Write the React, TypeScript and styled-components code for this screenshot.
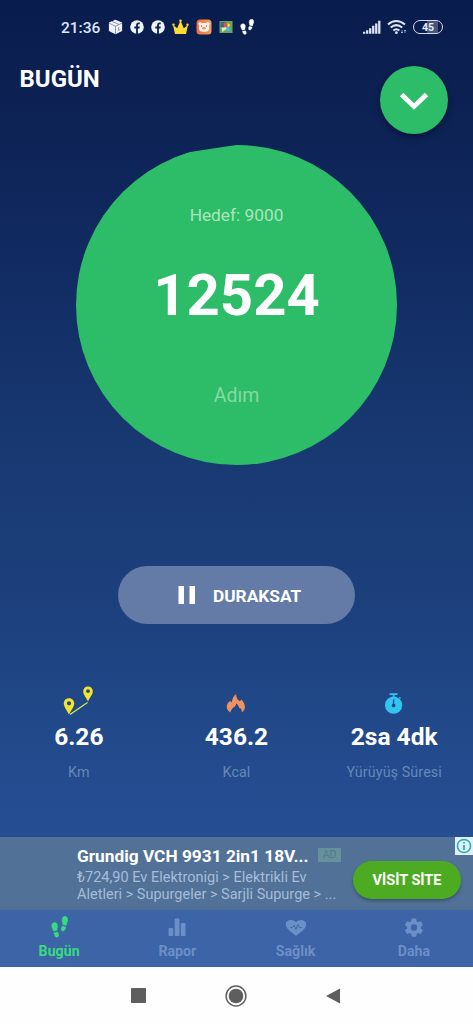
import React from "react";
import styled, { createGlobalStyle } from "styled-components";

const GlobalStyle = createGlobalStyle`
  * { box-sizing: border-box; }
  body { margin: 0; font-family: Roboto, "Noto Sans", sans-serif; }
  svg { display: block; flex: none; }
`;

const Screen = styled.main`
  width: 473px;
  height: 1024px;
  overflow: hidden;
  display: flex;
  flex-direction: column;
  color: #fff;
  background: linear-gradient(180deg, #091c4e 0, #0c2052 90px, #112b62 260px, #183871 440px, #1d417e 620px, #224a8b 740px, #254e93 837px);
`;

const StatusBar = styled.header`
  height: 54px;
  padding: 0 30px 0 61px;
  display: flex;
  align-items: center;
  justify-content: space-between;
`;

const StatusGroup = styled.div<{ $gap: number }>`
  display: flex;
  align-items: center;
  gap: ${(p) => p.$gap}px;
`;

const Clock = styled.span`
  width: 40px;
  padding-top: 2px;
  font-size: 15.5px;
  font-weight: 500;
  line-height: 20px;
  color: #dfe6f7;
  white-space: nowrap;
`;

const Battery = styled.span`
  width: 30px;
  height: 14px;
  border: 1.5px solid #d3daec;
  border-radius: 7px;
  display: grid;
  place-items: center;
  font-size: 10.5px;
  font-weight: 700;
  line-height: 11px;
  color: #e6ebf7;
  background: linear-gradient(90deg, transparent 45%, #46547c 45%, #46547c 85%, transparent 85%);
`;

const TitleBar = styled.div`
  height: 91px;
  padding: 12px 25px 0 19.5px;
  display: flex;
  align-items: flex-start;
  justify-content: space-between;
`;

const Title = styled.h1`
  margin: -1px 0 0;
  font-size: 24px;
  line-height: 28px;
  font-weight: 700;
`;

const RoundButton = styled.button`
  width: 68px;
  height: 68px;
  padding: 0;
  border: 0;
  border-radius: 50%;
  display: grid;
  place-items: center;
  background: #2dbc67;
  box-shadow: 0 3px 6px rgba(0, 8, 35, 0.5);
`;

const Dial = styled.section`
  width: 321px;
  height: 320px;
  margin: 0 auto;
  border-radius: 50%;
  background: #2dbc67;
  clip-path: polygon(0 0, 36px 30px, 114px 7px, 160px 0, 321px 0, 321px 321px, 0 321px);
  display: flex;
  flex-direction: column;
  align-items: center;
  padding-top: 60px;
`;

const Goal = styled.span`
  font-size: 17.3px;
  line-height: 20px;
  color: #a9e6bd;
`;

const Steps = styled.strong`
  margin-top: 36px;
  font-size: 58px;
  line-height: 68px;
  font-weight: 700;
`;

const Unit = styled.span`
  margin-top: 55px;
  font-size: 19.5px;
  line-height: 24px;
  color: #86d9a3;
`;

const PauseButton = styled.button`
  width: 237px;
  height: 58px;
  margin: 101px auto 0;
  padding: 0 0 0 60px;
  border: 0;
  border-radius: 29px;
  display: flex;
  align-items: center;
  gap: 18px;
  background: #637ba6;
  color: #fff;
  font: 700 17.3px/22px Roboto, sans-serif;
`;

const PauseText = styled.span`
  padding-top: 1px;
`;

const Stats = styled.section`
  height: 213px;
  padding-top: 61px;
  display: grid;
  grid-template-columns: repeat(3, 1fr);
`;

const Stat = styled.div`
  display: flex;
  flex-direction: column;
  align-items: center;
`;

const StatIcon = styled.div`
  height: 32px;
  display: flex;
  align-items: flex-end;
`;

const StatValue = styled.strong`
  margin-top: 5px;
  font-size: 24.5px;
  line-height: 30px;
  font-weight: 700;
  white-space: nowrap;
`;

const StatLabel = styled.span`
  margin-top: 11px;
  font-size: 14.3px;
  line-height: 18px;
  letter-spacing: 0.1px;
  color: #6887b7;
  white-space: nowrap;
`;

const Ad = styled.aside`
  position: relative;
  height: 73px;
  padding: 8px 12px 0 77px;
  display: flex;
  background: #527196;
`;

const AdCopy = styled.div`
  width: 276px;
  flex: none;
`;

const AdHeading = styled.div`
  display: flex;
  align-items: center;
  gap: 9px;
  height: 22px;
`;

const AdTitle = styled.strong`
  width: 232px;
  font-size: 17.3px;
  line-height: 22px;
  white-space: nowrap;
`;

const AdTag = styled.span`
  width: 23px;
  height: 14px;
  margin-top: -2px;
  display: grid;
  place-items: center;
  background: #66909a;
  color: #507b8d;
  font-size: 10.5px;
  line-height: 14px;
`;

const AdText = styled.p`
  margin: 2px 0 0;
  font-size: 14.5px;
  line-height: 17px;
  color: #a5bddb;
  white-space: nowrap;
`;

const VisitButton = styled.button`
  width: 108px;
  height: 38px;
  margin-top: 16px;
  padding: 2px 0 0;
  border: 0;
  border-radius: 19px;
  background: #4dab22;
  color: #fff;
  font: 700 14.5px/18px Roboto, sans-serif;
  box-shadow: 0 2px 3px rgba(20, 40, 70, 0.4);
  white-space: nowrap;
`;

const InfoBadge = styled.span`
  position: absolute;
  top: 0;
  right: 0;
  width: 18px;
  height: 18px;
  display: grid;
  place-items: center;
  background: #e0eff8;
`;

const Tabs = styled.nav`
  height: 57px;
  display: grid;
  grid-template-columns: repeat(4, 1fr);
  background: #3c64a6;
`;

const Tab = styled.div<{ $active?: boolean }>`
  display: flex;
  flex-direction: column;
  align-items: center;
  padding-top: 6px;
  gap: 4px;
  color: ${(p) => (p.$active ? "#38dc80" : "#6c8fc7")};
  font-size: 14.2px;
  font-weight: 700;
  line-height: 18px;
`;

const SystemNav = styled.footer`
  height: 57px;
  padding: 0 132px 0 131px;
  display: flex;
  align-items: center;
  justify-content: space-between;
  background: #fefefe;
`;

const Feet = ({ size, width = size }: { size: number; width?: number }) => (
  <svg width={width} height={size} viewBox="0 0 18 22" preserveAspectRatio="none" fill="currentColor" stroke="currentColor" strokeWidth=".5">
    <path d="M3.5 6.5C1.1 6.7.4 9.1 1 11.1c.4 1.6 1.2 2.6 1.7 4.2l3.7-1C6.2 12.4 7 11.4 6.9 9.6 6.8 7.7 5.6 6.3 3.5 6.5Z" />
    <path d="m3.2 17 3.7-1c1.1.9 1.9 4.2.2 5.1-2 .9-3.5-1.6-3.9-4.1Z" />
    <path d="M15.1.3c2.5.4 3 2.8 2.4 5-.5 1.7-1.2 2.7-1.5 4.2l-3.6-1c.1-1.8-.8-2.9-.6-4.9.2-2 1.4-3.6 3.3-3.3Z" />
    <path d="m12.1 10.1 3.5 1c-.4 2.4-1.8 4.8-3.7 4-1.8-.9-.8-4 .2-5Z" />
  </svg>
);

const Facebook = () => (
  <svg width="14" height="14" viewBox="0 0 14 14">
    <circle cx="7" cy="7" r="6.8" fill="#eff5ff" />
    <path d="M6.1 14V8.5H4.3V6.4h1.8V5.2c0-2 1-2.8 2.5-2.8h1.2v1.8h-.9c-.8 0-1 .4-1 1.1v1.1h1.9l-.3 2.1H7.9V14" fill="#0b2053" />
  </svg>
);

const StatusIcons = () => (
  <>
    <svg width="15" height="16" viewBox="0 0 15 16">
      <path d="m7.5.7 6.6 2.8v8.4l-6.6 3.4-6.6-3.4V3.5Z" fill="#eef3ff" />
      <path d="m1 4.2 6.5 3 6.5-3M7.5 7.2v8M4 2.4l6.8 3M10.6 8.2v3.2l1.6-.8" fill="none" stroke="#4a5c84" strokeWidth=".6" />
    </svg>
    <Facebook />
    <Facebook />
    <svg width="17" height="16" viewBox="0 0 17 16">
      <path d="M3 15 1 6l4.2 3.2L8.500 1.500l3.300 7.700L16 6l-2 9Z" fill="#ffdb35" />
      <g fill="#ffdb35"><circle cx="1.5" cy="5.8" r="1.2" /><circle cx="8.5" cy="1.8" r="1.3" /><circle cx="15.5" cy="5.8" r="1.2" /></g>
    </svg>
    <svg width="16" height="16" viewBox="0 0 16 16">
      <defs><linearGradient id="app" x1="0" x2="1"><stop stopColor="#f06a3f" /><stop offset="1" stopColor="#eda15d" /></linearGradient></defs>
      <rect x=".5" y=".5" width="15" height="15" rx="3.5" fill="url(#app)" />
      <circle cx="4" cy="4.8" r="1.7" fill="#ffe9dc" /><circle cx="12" cy="4.8" r="1.7" fill="#ffe9dc" />
      <rect x="2.8" y="4" width="10.4" height="8.7" rx="4" fill="#fff1e8" />
      <circle cx="5.5" cy="7" r=".7" fill="#925b4a" /><circle cx="10.5" cy="7" r=".7" fill="#925b4a" />
      <ellipse cx="8" cy="9.2" rx="2" ry="1.2" fill="#ec9277" />
    </svg>
    <svg width="14" height="14" viewBox="0 0 13 14">
      <path fill="#67a754" d="M0 1h13v12H0Z" />
      <path fill="#47638a" d="M1 2h5v5H1Z" /><path fill="#d95847" d="M4 3h4l1 4-4 1Z" />
      <path fill="#f2dc5a" d="m8 3 3 2-3 3Z" /><path fill="#4cb6dc" d="M6 7h4l1 4H7Z" />
      <path fill="#e7e8cb" d="m2 8 4-1 1 2-4 3Z" />
    </svg>
    <Feet size={16} width={14} />
  </>
);

const Signal = () => (
  <svg width="18" height="14" viewBox="0 0 19 14" fill="#dee5f5">
    <path d="M0 12h2.400v2H0ZM3.2 10.3h2.4V14H3.2ZM6.4 8.2h2.4V14H6.4ZM9.6 5.8H12V14H9.6ZM12.8 3.2h2.4V14h-2.4ZM16 .5h2.4V14H16Z" />
  </svg>
);

const Wifi = () => (
  <svg width="20" height="16" viewBox="0 0 20 16" fill="none" stroke="#dee5f5" strokeWidth="2">
    <path d="M1 5.5Q9 -1.4 18 5.5M3.7 8.6Q9.3 3.6 15.2 8.6M6.3 11.5Q9.3 8.9 12.4 11.5" />
    <circle cx="9.4" cy="13.7" r="1.4" fill="#dee5f5" stroke="none" />
    <path d="M15 11v3m-1-1 1 1 1-1M18 14v-3m-1 1 1-1 1 1" strokeWidth=".6" />
  </svg>
);

const Route = () => (
  <svg width="32" height="31" viewBox="0 0 32 31">
    <path d="m7 28.5 17.5-12" fill="none" stroke="#d4e94e" strokeWidth="1.3" />
    <path fillRule="evenodd" fill="#f5e52e" d="M6 12.2c3.2 0 5.2 2.4 5.2 5.2 0 3.4-3.1 6.8-5.2 11.1C3.9 24.2.8 20.8.8 17.4c0-2.8 2-5.2 5.2-5.2Zm0 3a2.1 2.1 0 1 0 0 4.2 2.1 2.1 0 0 0 0-4.2ZM25 .5c3 0 4.8 2.1 4.8 4.8 0 3.3-2.8 6-4.8 10.3-2-4.3-4.8-7-4.8-10.3C20.2 2.6 22 .5 25 .5Zm0 2.7a1.9 1.9 0 1 0 0 3.8 1.9 1.9 0 0 0 0-3.8Z" />
  </svg>
);

const Flame = () => (
  <svg width="20" height="25" viewBox="0 0 20 25">
    <path d="M4.300 20.500C-.5 17.500-.3 12 4.300 8.800c.2 1.200.7 1.500 1.500 1.400C6.200 6.500 7.700 4 10.300 2c-.2 3.200.6 5 3.200 6.900.9-.1 1.500-.6 1.700-1.500 4.600 4.300 5.100 9.700.5 13.100.2-1.700 0-2.800-.9-4.100-1.300-.1-1.800-.7-1.900-1.700-.8-1.300-1.400-2.400-2.600-3.500-.4 2.500-1.400 3.700-3 4.300-1.300 1.300-2.400 2.800-3 5Z" fill="#ee935f" />
  </svg>
);

const Stopwatch = () => (
  <svg width="20" height="24" viewBox="-.5 0 20 24">
    <circle cx="9.1" cy="12.2" r="8.6" fill="#33c5f2" />
    <path d="M5 1.2h8M9.1 1v4" stroke="#33c5f2" strokeWidth="1.7" />
    <path d="m14.700 4.200 1.300 1.200" stroke="#33c5f2" strokeWidth="1.300" />
    <path d="M9.1 6.5v5.8" stroke="#204a87" strokeWidth="1.3" />
    <circle cx="9.1" cy="12.4" r="1.9" fill="#204a87" />
  </svg>
);

const Bars = () => (
  <svg width="18" height="22" viewBox="0 0 18 22" fill="currentColor">
    <rect x=".5" y="12" width="4.7" height="8" rx=".7" /><rect x="6.7" y="2.5" width="4.7" height="17.5" rx=".7" /><rect x="12.8" y="7" width="4.7" height="13" rx=".7" />
  </svg>
);

const Heart = () => (
  <svg width="22" height="22" viewBox="0 0 22 22">
    <path d="M11 20C7.5 16.8.8 12.9.8 8.5c0-4.7 6.7-6.1 10.2-2.3 3.5-3.8 10.2-2.4 10.2 2.3 0 4.4-6.7 8.3-10.2 11.5Z" fill="currentColor" />
    <path d="M5.3 11.5h2.2L9 9.4l2 4 1.8-5 1.5 3.1h2.4" fill="none" stroke="#3c64a6" strokeWidth=".9" />
  </svg>
);

const Gear = () => (
  <svg width="22" height="22" viewBox="0 -.6 24 24" fill="currentColor">
    <path fillRule="evenodd" d="M19.4 13a7.8 7.8 0 0 0 0-2l2.1-1.6c.2-.2.2-.4.1-.6l-2-3.5c-.1-.2-.4-.3-.6-.2l-2.5 1a7.3 7.3 0 0 0-1.7-1l-.4-2.6a.5.5 0 0 0-.5-.4h-4c-.2 0-.4.2-.5.4L9 5.1a7.3 7.3 0 0 0-1.7 1l-2.5-1c-.2-.1-.5 0-.6.2l-2 3.5c-.1.2-.1.4.1.6L4.5 11a7.8 7.8 0 0 0 0 2l-2.2 1.6c-.2.2-.2.4-.1.6l2 3.5c.1.2.4.3.6.2l2.5-1c.5.4 1.1.8 1.7 1l.4 2.6c.1.2.3.4.5.4h4c.2 0 .4-.2.5-.4l.4-2.6a7.3 7.3 0 0 0 1.7-1l2.5 1c.2.1.5 0 .6-.2l2-3.5c.1-.2.1-.4-.1-.6ZM12 15.5a3.5 3.5 0 1 1 0-7 3.5 3.5 0 0 1 0 7Z" />
  </svg>
);

const stats = [
  { icon: <Route />, value: "6.26", label: "Km" },
  { icon: <Flame />, value: "436.2", label: "Kcal" },
  { icon: <Stopwatch />, value: "2sa 4dk", label: "Yürüyüş Süresi" },
];

const tabs = [
  { icon: <Feet size={22} width={17} />, label: "Bugün", active: true },
  { icon: <Bars />, label: "Rapor" },
  { icon: <Heart />, label: "Sağlık" },
  { icon: <Gear />, label: "Daha" },
];

export default function App() {
  return (
    <>
      <GlobalStyle />
      <Screen>
        <StatusBar>
          <StatusGroup $gap={7}><Clock>21:36</Clock><StatusIcons /></StatusGroup>
          <StatusGroup $gap={6}><Signal /><Wifi /><Battery>45</Battery></StatusGroup>
        </StatusBar>
        <TitleBar>
          <Title>BUGÜN</Title>
          <RoundButton aria-label="Menu">
            <svg width="30" height="20" viewBox="0 0 30 20"><path d="m2.5 4.5 12.5 12 12.5-12" fill="none" stroke="#fff" strokeWidth="4.8" /></svg>
          </RoundButton>
        </TitleBar>
        <Dial><Goal>Hedef: 9000</Goal><Steps>12524</Steps><Unit>Adım</Unit></Dial>
        <PauseButton>
          <svg width="17" height="18" viewBox="0 0 17 18" fill="#fff"><path d="M.5 0h5.500v18H.5ZM11.500 0H17v18h-5.500Z" /></svg>
          <PauseText>DURAKSAT</PauseText>
        </PauseButton>
        <Stats>
          {stats.map((s) => (
            <Stat key={s.label}><StatIcon>{s.icon}</StatIcon><StatValue>{s.value}</StatValue><StatLabel>{s.label}</StatLabel></Stat>
          ))}
        </Stats>
        <Ad>
          <AdCopy>
            <AdHeading><AdTitle>Grundig VCH 9931 2in1 18V...</AdTitle><AdTag>AD</AdTag></AdHeading>
            <AdText>₺724,90 Ev Elektronigi &gt; Elektrikli Ev<br />Aletleri &gt; Supurgeler &gt; Sarjli Supurge &gt; ...</AdText>
          </AdCopy>
          <VisitButton>VİSİT SİTE</VisitButton>
          <InfoBadge>
            <svg width="16" height="16" viewBox="0 0 16 16" fill="none" stroke="#26b0b5" strokeWidth="1.5"><circle cx="8" cy="8" r="6.6" /><path d="M8 7v5M8 4v1.6" strokeWidth="1.8" /></svg>
          </InfoBadge>
        </Ad>
        <Tabs>
          {tabs.map((t) => <Tab key={t.label} $active={t.active}>{t.icon}{t.label}</Tab>)}
        </Tabs>
        <SystemNav>
          <svg width="15" height="15" viewBox="0 0 15 15"><rect width="15" height="15" rx=".8" fill="#5e5e5e" /></svg>
          <svg width="22" height="22" viewBox="0 0 22 22"><circle cx="11" cy="11" r="9.9" fill="none" stroke="#5e5e5e" strokeWidth="1.5" /><circle cx="11" cy="11" r="7.3" fill="#5e5e5e" /></svg>
          <svg width="15" height="16" viewBox="0 0 15 16"><path d="M0 8 14 .5v15Z" fill="#5e5e5e" /></svg>
        </SystemNav>
      </Screen>
    </>
  );
}
